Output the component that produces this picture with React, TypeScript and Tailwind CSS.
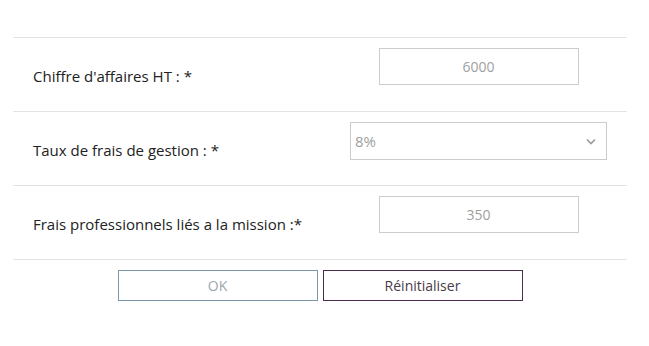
import React from 'react'

const Row = ({ label, children }: { label: string; children: React.ReactNode }) => {
  return (
    <div className="flex h-[74px] border-b border-[#e3e3e3]">
      <div className="w-[317px] pl-5 pt-[27px] text-[15px] text-[#222]">{label}</div>
      <div className="flex-1 px-5 pt-[10px]">{children}</div>
    </div>
  )
}

const App = () => {
  return (
    <div className="w-[649px] h-[346px] bg-white" style={{ fontFamily: '"Open Sans", sans-serif' }}>
      <div className="mx-[13px] pt-[37px] w-[614px]">
        <div className="border-t border-[#e3e3e3]">
          <Row label="Chiffre d'affaires HT : *">
            <div className="flex justify-center">
              <input
                readOnly
                value="6000"
                className="w-[200px] h-[37px] border border-[#cccccc] text-center text-[14px] text-[#a0a0a0] outline-none"
              />
            </div>
          </Row>
          <Row label="Taux de frais de gestion : *">
            <div className="flex h-[38px] items-center justify-between border border-[#cccccc] pl-[4px] pr-[10px] text-[15px] text-[#a0a0a0]">
              <span>8%</span>
              <svg width="10" height="7" viewBox="0 0 10 7" fill="none">
                <path d="M1 1.5 L5 5.5 L9 1.5" stroke="#9a9a9a" strokeWidth="1.6" />
              </svg>
            </div>
          </Row>
          <Row label="Frais professionnels liés a la mission :*">
            <div className="flex justify-center">
              <input
                readOnly
                value="350"
                className="w-[200px] h-[37px] border border-[#cccccc] text-center text-[14px] text-[#a0a0a0] outline-none"
              />
            </div>
          </Row>
        </div>
        <div className="flex justify-center gap-[5px] pt-[10px]">
          <button className="w-[200px] h-[31px] border border-[#7d97aa] text-[14px] text-[#9aa6b0]">OK</button>
          <button className="w-[200px] h-[31px] border border-[#4c2a4f] text-[14px] text-[#4a3a4a]">Réinitialiser</button>
        </div>
      </div>
    </div>
  )
}

export default App
